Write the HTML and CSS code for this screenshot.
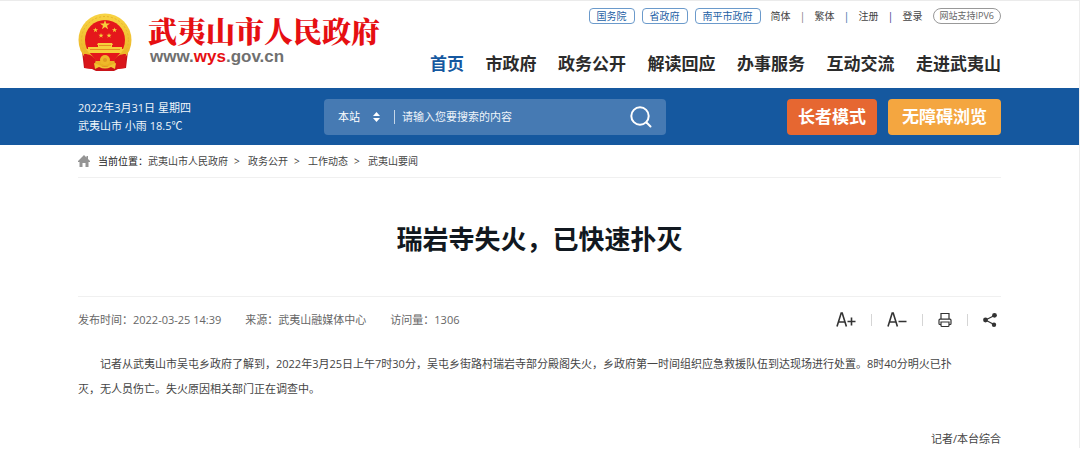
FILE: index.html
```html
<!DOCTYPE html>
<html lang="zh-CN">
<head>
<meta charset="utf-8">
<meta name="viewport" content="width=device-width, initial-scale=1">
<title>瑞岩寺失火，已快速扑灭 - 武夷山市人民政府</title>
<link rel="stylesheet" href="styles.css">
</head>
<body>
<header class="header wrap">
  <a class="brand" href="#">
    <svg class="emblem" viewBox="0 0 54 58" aria-hidden="true">
      <defs>
        <linearGradient id="gold" x1="0" y1="0" x2="0" y2="1">
          <stop offset="0" stop-color="#f8d444"/>
          <stop offset="1" stop-color="#e9ae20"/>
        </linearGradient>
      </defs>
      <path fill="#c91419" d="M4 38 6 55l8 1 4 2h18l4-2 8-1 2-17z"/>
      <circle cx="27" cy="27" r="26.500" fill="url(#gold)"/>
      <circle cx="27" cy="27" r="23.500" fill="none" stroke="#e8b52c" stroke-width="1" stroke-dasharray="2 2"/>
      <circle cx="27" cy="27" r="20" fill="#e5171b"/>
      <path fill="#f6d03b" d="m27 7 1.200 3.500H32l-3 2.200 1.100 3.600-3.100-2.200-3.100 2.200 1.100-3.600-3-2.200h3.800z"/>
      <path fill="#f6d03b" d="m17.500 14.500.6 1.800H20l-1.500 1.100.6 1.800-1.600-1.100-1.600 1.100.6-1.800-1.500-1.100h1.900zM36.500 14.500l.6 1.800H39l-1.500 1.100.6 1.800-1.600-1.100-1.600 1.100.6-1.800-1.500-1.100h1.900zM23 20l.6 1.800h1.900L24 22.900l.6 1.800-1.600-1.100-1.600 1.100.6-1.800-1.500-1.100h1.900zM31 20l.6 1.800h1.900L32 22.900l.6 1.800-1.600-1.100-1.600 1.100.6-1.800-1.500-1.100h1.900z"/>
      <path fill="#f6d03b" d="M20 30h14l1 2h-1v2h10v2h2l-3 4H11l-3-4h2v-2h10v-2h-1z"/>
      <path fill="#e78b22" d="M12 36h30v1H12zM21 32h12v1H21z"/>
      <path fill="#d9151a" d="M6 41c6 0 9 2 12 6l-3 9-8-1zM48 41c-6 0-9 2-12 6l3 9 8-1z"/>
      <path fill="#e5171b" d="M14 42h26l-4 6H18z"/>
      <circle cx="27" cy="47" r="5" fill="#efb829"/>
      <circle cx="27" cy="47" r="2" fill="#e09a20"/>
      <path fill="#f2c332" d="m16 50 5 2q6 3 12 0l5-2-1 6-4-2q-6 3-12 0l-4 2z"/>
    </svg>
    <span class="brand-text">
      <span class="brand-name">武夷山市人民政府</span>
      <span class="brand-url">www.<span class="brand-hot">wys</span>.gov.cn</span>
    </span>
  </a>
  <div class="header-right">
    <div class="tools">
      <a class="tag" href="#">国务院</a>
      <a class="tag" href="#">省政府</a>
      <a class="tag" href="#">南平市政府</a>
      <div class="account">
        <a href="#">简体</a><span class="bar grey">|</span><a href="#">繁体</a><span class="bar blue">|</span><a href="#">注册</a><span class="bar navy">|</span><a href="#">登录</a>
      </div>
      <span class="pill">网站支持IPV6</span>
    </div>
    <nav class="nav">
      <a class="active" href="#">首页</a>
      <a href="#">市政府</a>
      <a href="#">政务公开</a>
      <a href="#">解读回应</a>
      <a href="#">办事服务</a>
      <a href="#">互动交流</a>
      <a href="#">走进武夷山</a>
    </nav>
  </div>
</header>

<div class="banner">
  <div class="banner-inner wrap">
    <div class="weather">
      <div>2022年3月31日 星期四</div>
      <div>武夷山市 小雨 18.5℃</div>
    </div>
    <form class="search">
      <label class="scope">
        <select aria-label="搜索范围"><option>本站</option></select>
        <svg class="sort" viewBox="0 0 7 10" aria-hidden="true"><path fill="currentColor" d="M3.500 0 7 4H0zM3.500 10 0 6h7z"/></svg>
      </label>
      <input class="query" type="text" aria-label="搜索内容" placeholder="请输入您要搜索的内容">
      <button class="go" type="button" aria-label="搜索">
        <svg viewBox="0 0 22 22" fill="none" stroke="currentColor" stroke-width="2" stroke-linecap="round" aria-hidden="true"><circle cx="10" cy="10" r="8.700"/><path d="m16.500 16.500 4 4"/></svg>
      </button>
    </form>
    <div class="modes">
      <button class="mode elder" type="button">长者模式</button>
      <button class="mode access" type="button">无障碍浏览</button>
    </div>
  </div>
</div>

<main class="wrap">
  <nav class="crumbs" aria-label="当前位置">
    <svg class="home" viewBox="0 0 12 12" aria-hidden="true"><path fill="#949494" d="M6 0 0 6v1h1.500v5h3V8h3v4h3V7H12V6l-2-2V1H8.500v1.500z"/></svg>
    <span class="here">当前位置：</span><a href="#">武夷山市人民政府</a><span class="sep">&gt;</span><a href="#">政务公开</a><span class="sep">&gt;</span><a href="#">工作动态</a><span class="sep">&gt;</span><a href="#">武夷山要闻</a>
  </nav>
  <article>
    <h1 class="title">瑞岩寺失火，已快速扑灭</h1>
    <div class="meta">
      <span>发布时间：2022-03-25 14:39</span>
      <span>来源：武夷山融媒体中心</span>
      <span>访问量：1306</span>
      <div class="actions">
        <button type="button" aria-label="放大字号"><svg class="size" viewBox="0 0 20 16" fill="none" stroke="currentColor" stroke-width="1.600" aria-hidden="true"><path d="M1 14.500 5.200 1h1l4.200 13.500M2.500 10h6.400M11.500 9.500h8M15.500 5.500v8"/></svg></button>
        <span class="rule"></span>
        <button type="button" aria-label="缩小字号"><svg class="size" viewBox="0 0 20 16" fill="none" stroke="currentColor" stroke-width="1.600" aria-hidden="true"><path d="M1 14.500 5.200 1h1l4.200 13.500M2.500 10h6.400M11.500 9.500h8"/></svg></button>
        <span class="rule"></span>
        <button type="button" aria-label="打印"><svg class="small" viewBox="0 0 14 16" fill="none" stroke="currentColor" stroke-width="1.200" aria-hidden="true"><path d="M3 7V1.500h8V7M3 12.500H1.800Q1 12.500 1 11.500V8.200Q1 7.200 2 7.200h10q1 0 1 1v3.300q0 1-.8 1H11M3 10h8v3.500q0 1-1 1H4q-1 0-1-1z"/></svg></button>
        <span class="rule"></span>
        <button type="button" aria-label="分享"><svg class="small" viewBox="0 0 14 16" aria-hidden="true"><path d="M11.500 3.500 2.500 8l8.500 4.500" fill="none" stroke="currentColor" stroke-width="1.200"/><g fill="currentColor"><circle cx="11.500" cy="3.300" r="2.400"/><circle cx="2.500" cy="8" r="2.400"/><circle cx="11" cy="12.700" r="2.200"/></g></svg></button>
      </div>
    </div>
    <p class="text">记者从武夷山市吴屯乡政府了解到，2022年3月25日上午7时30分，吴屯乡街路村瑞岩寺部分殿阁失火，乡政府第一时间组织应急救援队伍到达现场进行处置。8时40分明火已扑灭，无人员伤亡。失火原因相关部门正在调查中。</p>
    <p class="author">记者/本台综合</p>
  </article>
</main>
</body>
</html>
```
FILE: styles.css
```css
* { box-sizing: border-box; }

body {
  margin: 0;
  border-top: 1px solid #ebebeb;
  border-right: 1px solid #ededed;
  background: #fff;
  color: #444;
  font: 11px/18px "Open Sans", "Noto Sans CJK SC", sans-serif;
}

a { color: inherit; text-decoration: none; }
button, input, select { font: inherit; color: inherit; border: 0; padding: 0; margin: 0; background: none; }
button { cursor: pointer; }
svg { display: block; }

.wrap { width: 86%; max-width: 923px; margin: 0 auto; }

.header { display: flex; justify-content: space-between; min-height: 87px; }
.brand { display: flex; gap: 16px; padding-top: 12px; }
.emblem { width: 54px; height: 58px; }
.brand-text { display: flex; flex-direction: column; }
.brand-name {
  color: #e60f12;
  font: 900 29px/36px "Noto Serif CJK SC", "Noto Serif SC", "Noto Sans CJK SC", serif;
  white-space: nowrap;
}
.brand-url { color: #707070; font: bold 17px/16px "Liberation Sans", Arial, sans-serif; padding-left: 2px; }
.brand-hot { color: #e60f12; }

.header-right { display: flex; flex-direction: column; flex: 0 0 571px; padding-top: 7px; }
.tools { display: flex; align-items: center; justify-content: flex-end; font-size: 10px; line-height: 14px; white-space: nowrap; }
.tag { margin-right: 7px; padding: 0 7px; border: 1px solid #6b9acb; border-radius: 4px; color: #2461a5; }
.account { display: flex; margin: 0 10px 0 3px; }
.bar { width: 24px; text-align: center; }
.grey { color: #777; }
.blue { color: #2a6a9c; }
.navy { color: #1d2f80; }
.pill { padding: 0 6px; border: 1px solid #999; border-radius: 8px; color: #666; font-size: 9px; }

.nav { display: flex; justify-content: space-between; margin-top: 27px; color: #2b2b2b; font-size: 17px; font-weight: 700; line-height: 26px; white-space: nowrap; }
.active { color: #1558a0; }

.banner { background: #15589f; color: #fff; }
.banner-inner { display: flex; align-items: center; min-height: 57px; }
.weather { flex: 0 0 246px; color: #f0f5fa; }
.search { display: flex; align-items: center; flex: 0 1 342px; height: 36px; padding: 0 14px; border-radius: 4px; background: #467ab3; }
.scope { display: flex; align-items: center; justify-content: space-between; width: 57px; height: 14px; padding-right: 14px; border-right: 1px solid #c5d6e8; }
.scope select { appearance: none; width: 24px; }
.sort { width: 7px; height: 10px; }
.query { flex: 1; min-width: 0; padding-left: 7px; outline: 0; }
.query::placeholder { color: #eef4fa; opacity: 1; }
.go svg { width: 22px; height: 22px; }
.modes { display: flex; gap: 11px; margin-left: auto; }
.mode { height: 36px; border-radius: 4px; font-size: 17px; font-weight: 700; white-space: nowrap; }
.elder { padding: 0 11px; background: #e66731; }
.access { padding: 0 14px; background: #f4a640; }

.crumbs { display: flex; align-items: center; min-height: 33px; border-bottom: 1px solid #f0f0f0; font-size: 10px; }
.home { width: 12px; height: 12px; margin-right: 8px; }
.here { color: #222; }
.sep { width: 20px; padding-left: 6px; }

.title { margin: 0; padding: 42px 0 38px; border-bottom: 1px solid #f0f0f0; color: #111820; font-size: 26px; line-height: 38px; text-align: center; }
.meta { display: flex; align-items: center; gap: 24px; min-height: 45px; color: #666; }
.actions { display: flex; align-items: center; gap: 15px; margin-left: auto; padding-right: 4px; color: #333; }
.rule { width: 1px; height: 12px; background: #d5d5d5; }
.size { width: 20px; height: 16px; }
.small { width: 14px; height: 16px; }
.text { margin: 9px 0 0; padding-right: 40px; line-height: 25px; text-indent: 22px; }
.author { margin: 29px 0 0; text-align: right; }
```
